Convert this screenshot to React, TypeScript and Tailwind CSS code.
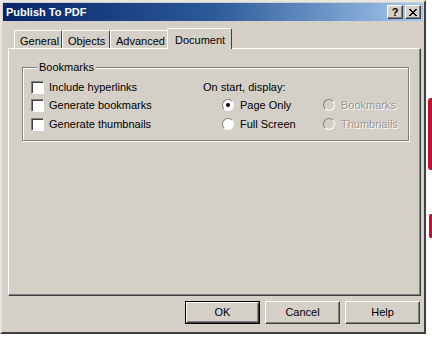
import React from "react";

const raised =
  "border border-t-white border-l-white border-r-[#404040] border-b-[#404040] shadow-[inset_-1px_-1px_0_#808080]";

function CheckBox({ label }: { label: string }) {
  return (
    <div className="flex items-center h-[18px]">
      <span className="w-[13px] h-[13px] bg-white border border-t-[#808080] border-l-[#808080] border-r-white border-b-white shadow-[inset_1px_1px_0_#404040]" />
      <span className="ml-[5px] text-black">{label}</span>
    </div>
  );
}

function Radio({ label, checked, disabled }: { label: string; checked?: boolean; disabled?: boolean }) {
  return (
    <div className="flex items-center h-[18px]">
      <span
        className={`w-[12px] h-[12px] rounded-full flex items-center justify-center border border-t-[#808080] border-l-[#808080] border-r-white border-b-white ${
          disabled ? "bg-[#d4d0c8]" : "bg-white"
        }`}
      >
        {checked && <span className="w-[4px] h-[4px] rounded-full bg-black" />}
      </span>
      <span
        className={`ml-[6px] ${
          disabled ? "text-[#9a9892] [text-shadow:1px_1px_0_#ffffff]" : "text-black"
        }`}
      >
        {label}
      </span>
    </div>
  );
}

function Tab({ label, active, w }: { label: string; active?: boolean; w: string }) {
  if (active) {
    return (
      <div
        className={`${w} h-[21px] -mx-[2px] -mb-px relative z-10 bg-[#d4d0c8] border-t border-l border-r border-t-white border-l-white border-r-[#404040] rounded-t-[2px] flex items-start pt-[6px] pl-[7px]`}
      >
        {label}
      </div>
    );
  }
  return (
    <div
      className={`${w} h-[18px] border-t border-l border-r border-t-white border-l-white border-r-[#404040] rounded-t-[2px] flex items-start pt-[5px] pl-[5px]`}
    >
      {label}
    </div>
  );
}

function Button({ label, isDefault }: { label: string; isDefault?: boolean }) {
  const inner = (
    <div className={`w-full h-full flex items-center justify-center ${raised}`}>{label}</div>
  );
  return isDefault ? (
    <div className="w-[75px] h-[23px] border border-black">{inner}</div>
  ) : (
    <div className="w-[75px] h-[23px]">{inner}</div>
  );
}

export default function App() {
  return (
    <div className="w-[432px] h-[338px] bg-white relative overflow-hidden font-['Liberation_Sans',sans-serif] text-[11px] text-black leading-none">
      <div className="w-[426px] h-[334px] bg-[#d4d0c8] border-2 border-t-[#e8e6e0] border-l-[#e8e6e0] border-r-[#404040] border-b-[#404040] p-px flex flex-col">
        {/* title bar */}
        <div className="h-[18px] bg-gradient-to-r from-[#0a246a] via-[#2c5a98] to-[#a6caf0] flex items-center pl-[3px] pr-[2px]">
          <span className="text-white font-bold text-[11px]">Publish To PDF</span>
          <div className="ml-auto flex gap-[2px]">
            <div className={`w-[16px] h-[14px] bg-[#d4d0c8] flex items-center justify-center font-bold text-[11px] ${raised}`}>
              ?
            </div>
            <div className={`w-[16px] h-[14px] bg-[#d4d0c8] flex items-center justify-center ${raised}`}>
              <svg width="8" height="7" viewBox="0 0 8 7">
                <path d="M0 0L7 7M1 0L8 7M7 0L0 7M8 0L1 7" stroke="#000" strokeWidth="1" />
              </svg>
            </div>
          </div>
        </div>

        {/* tabs */}
        <div className="flex items-end h-[27px] pl-[11px]">
          <Tab label="General" w="w-[48px]" />
          <Tab label="Objects" w="w-[48px]" />
          <Tab label="Advanced" w="w-[59px]" />
          <Tab label="Document" w="w-[65px]" active />
        </div>

        {/* pane */}
        <div className="ml-[5px] w-[413px] h-[248px] border border-t-white border-l-white border-r-[#404040] border-b-[#404040] shadow-[inset_-1px_-1px_0_#808080] pt-[13px] pl-[13px]">
          <fieldset className="w-[387px] h-[79px] border border-[#808080] shadow-[1px_1px_0_#ffffff,inset_1px_1px_0_#ffffff] pl-[8px]">
            <legend className="ml-[6px] px-[2px] bg-[#d4d0c8] relative">Bookmarks</legend>
            <div className="flex mt-[5px]">
              <div className="w-[172px] flex flex-col">
                <CheckBox label="Include hyperlinks" />
                <CheckBox label="Generate bookmarks" />
                <div className="mt-[1px]">
                  <CheckBox label="Generate thumbnails" />
                </div>
              </div>
              <div className="flex flex-col">
                <div className="h-[18px] flex items-center">On start, display:</div>
                <div className="flex pl-[19px]">
                  <div className="w-[101px] flex flex-col">
                    <Radio label="Page Only" checked />
                    <div className="mt-[1px]">
                      <Radio label="Full Screen" />
                    </div>
                  </div>
                  <div className="flex flex-col">
                    <Radio label="Bookmarks" disabled />
                    <div className="mt-[1px]">
                      <Radio label="Thumbnails" disabled />
                    </div>
                  </div>
                </div>
              </div>
            </div>
          </fieldset>
        </div>

        {/* buttons */}
        <div className="flex justify-end gap-[5px] mt-[5px] pr-[3px]">
          <Button label="OK" isDefault />
          <Button label="Cancel" />
          <Button label="Help" />
        </div>
      </div>

      {/* stray bits of the window behind */}
      <div className="absolute left-[428px] top-[98px] w-[4px] h-[72px] bg-[#c8102e] rounded-l-[3px]" />
      <div className="absolute left-[429px] top-[214px] w-[3px] h-[24px] bg-[#c8102e] rounded-l-[2px]" />
    </div>
  );
}
